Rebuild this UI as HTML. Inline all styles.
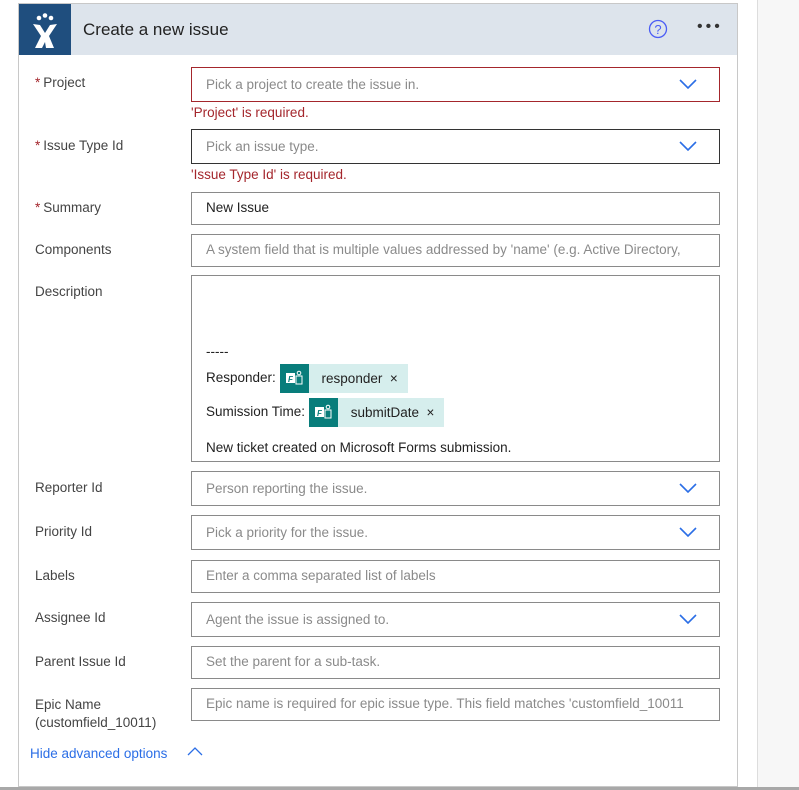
<!DOCTYPE html>
<html><head><meta charset="utf-8"><style>
*{box-sizing:border-box;margin:0;padding:0}
html,body{width:799px;height:790px;overflow:hidden}
body{background:#fff;position:relative;font-family:"Liberation Sans",sans-serif;font-size:13.5px;color:#333}
.a{position:absolute}
.card{left:18px;top:3px;width:720px;height:784px;border:1px solid #c8c8c8}
.hdr{left:19px;top:4px;width:718px;height:51px;background:#dde4ec}
.logo{left:19px;top:4px;width:52px;height:51px;background:#1f4e7e}
.lbl{left:35px;color:#444}
.req:before{content:"*";color:#a4262c;margin-right:3px}
.in{left:191px;width:529px;border:1px solid #8a8a8a;padding-left:14px;line-height:30px;color:#8a8a8a;white-space:nowrap;overflow:hidden}
.err{border-color:#a4262c}
.em{left:191px;color:#a4262c}
.chev{position:absolute;right:22px;top:11px;width:18px;height:10px}
.tok{display:inline-block;height:29px;background:#d6eeed;vertical-align:middle;line-height:29px;color:#222;padding-right:10px}
.tok i{display:inline-block;width:29px;height:29px;background:#087d7b;vertical-align:top;margin-right:13px;position:relative}
</style></head><body>
<div class="a" style="left:757px;top:0;width:42px;height:787px;background:#f7f7f7;border-left:1px solid #ddd"></div>
<div class="a card"></div>
<div class="a hdr"></div>
<div class="a logo"><svg width="52" height="51" viewBox="0 0 52 51"><circle cx="20" cy="14" r="2.3" fill="#fff"/><circle cx="26" cy="11.5" r="2.3" fill="#fff"/><circle cx="32" cy="14" r="2.3" fill="#fff"/><path d="M14 20 L21 21 L26 29 L31 21 L38 20 L30 32 L35 44 L27 44 L26 38 L23 44 L16 44 L22 32 Z" fill="#fff"/></svg></div>
<div class="a" style="left:83px;top:20px;font-size:17px;color:#222">Create a new issue</div>
<svg class="a" style="left:648px;top:19px" width="20" height="20"><circle cx="10" cy="10" r="8.5" fill="none" stroke="#4b5df5" stroke-width="1.3"/><text x="10" y="15" font-size="13" text-anchor="middle" fill="#4b5df5" font-family="Liberation Sans">?</text></svg>
<div class="a" style="left:697px;top:18px;font-size:16px;letter-spacing:3px;color:#333">•••</div>

<div class="a lbl req" style="top:75px">Project</div>
<div class="a in err" style="top:67px;height:35px;line-height:33px">Pick a project to create the issue in.<svg class="chev" viewBox="0 0 18 10"><path d="M1 1 L9 9 L17 1" fill="none" stroke="#2b6ee6" stroke-width="1.6"/></svg></div>
<div class="a em" style="top:105px">'Project' is required.</div>

<div class="a lbl req" style="top:138px">Issue Type Id</div>
<div class="a in" style="top:129px;height:35px;line-height:33px;border-color:#333">Pick an issue type.<svg class="chev" viewBox="0 0 18 10"><path d="M1 1 L9 9 L17 1" fill="none" stroke="#2b6ee6" stroke-width="1.6"/></svg></div>
<div class="a em" style="top:167px">'Issue Type Id' is required.</div>

<div class="a lbl req" style="top:200px">Summary</div>
<div class="a in" style="top:192px;height:33px;color:#222">New Issue</div>

<div class="a lbl" style="top:242px">Components</div>
<div class="a in" style="top:234px;height:33px">A system field that is multiple values addressed by 'name' (e.g. Active Directory,</div>

<div class="a lbl" style="top:284px">Description</div>
<div class="a in" style="top:275px;height:187px;color:#222;line-height:normal">
<div class="a" style="left:14px;top:68px">-----</div>
<div class="a" style="left:14px;top:88px">Responder: <span class="tok"><i><svg width="29" height="29"><rect x="6" y="9" width="9" height="10" fill="#fff"/><text x="8" y="18" font-size="8" font-weight="bold" fill="#087d7b" font-family="Liberation Sans">F</text><circle cx="19" cy="9" r="1.8" fill="none" stroke="#fff"/><rect x="16" y="12" width="6" height="8" fill="none" stroke="#fff"/></svg></i>responder &nbsp;×</span></div>
<div class="a" style="left:14px;top:122px">Sumission Time: <span class="tok"><i><svg width="29" height="29"><rect x="6" y="9" width="9" height="10" fill="#fff"/><text x="8" y="18" font-size="8" font-weight="bold" fill="#087d7b" font-family="Liberation Sans">F</text><circle cx="19" cy="9" r="1.8" fill="none" stroke="#fff"/><rect x="16" y="12" width="6" height="8" fill="none" stroke="#fff"/></svg></i>submitDate &nbsp;×</span></div>
<div class="a" style="left:14px;top:164px">New ticket created on Microsoft Forms submission.</div>
</div>

<div class="a lbl" style="top:480px">Reporter Id</div>
<div class="a in" style="top:471px;height:35px;line-height:33px">Person reporting the issue.<svg class="chev" viewBox="0 0 18 10"><path d="M1 1 L9 9 L17 1" fill="none" stroke="#2b6ee6" stroke-width="1.6"/></svg></div>

<div class="a lbl" style="top:524px">Priority Id</div>
<div class="a in" style="top:515px;height:35px;line-height:33px">Pick a priority for the issue.<svg class="chev" viewBox="0 0 18 10"><path d="M1 1 L9 9 L17 1" fill="none" stroke="#2b6ee6" stroke-width="1.6"/></svg></div>

<div class="a lbl" style="top:568px">Labels</div>
<div class="a in" style="top:560px;height:33px">Enter a comma separated list of labels</div>

<div class="a lbl" style="top:610px">Assignee Id</div>
<div class="a in" style="top:602px;height:35px;line-height:33px">Agent the issue is assigned to.<svg class="chev" viewBox="0 0 18 10"><path d="M1 1 L9 9 L17 1" fill="none" stroke="#2b6ee6" stroke-width="1.6"/></svg></div>

<div class="a lbl" style="top:654px">Parent Issue Id</div>
<div class="a in" style="top:646px;height:33px">Set the parent for a sub-task.</div>

<div class="a lbl" style="top:696px;line-height:18px">Epic Name<br>(customfield_10011)</div>
<div class="a in" style="top:688px;height:33px">Epic name is required for epic issue type. This field matches 'customfield_10011</div>

<div class="a" style="left:30px;top:746px;color:#2b6ee6">Hide advanced options</div>
<svg class="a" style="left:187px;top:747px" width="16" height="10"><path d="M1 8 L8 1 L15 8" fill="none" stroke="#2b6ee6" stroke-width="1.3"/></svg>
<div class="a" style="left:0;top:787px;width:799px;height:3px;background:#a8a8a8"></div>
</body></html>
